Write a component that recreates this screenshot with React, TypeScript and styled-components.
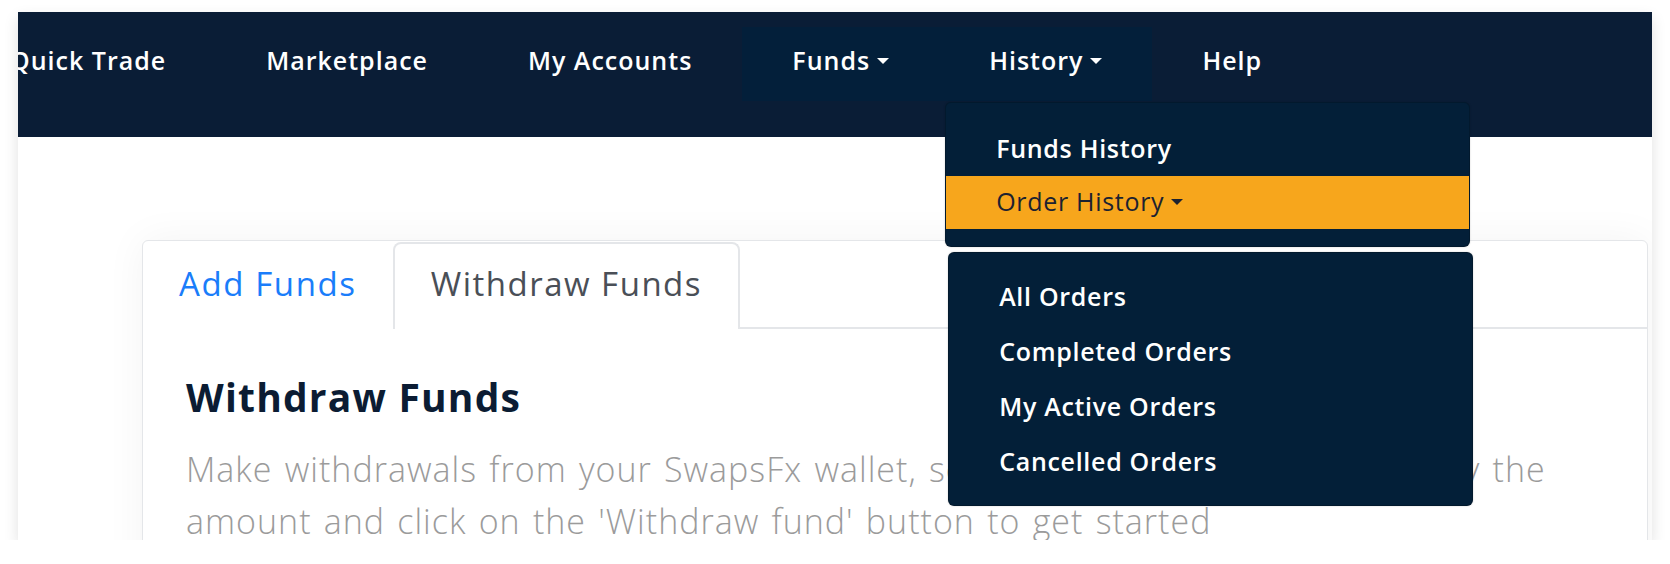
import React from "react";
import styled, { createGlobalStyle } from "styled-components";

const GlobalStyle = createGlobalStyle`
  html, body { margin: 0; padding: 0; background: #ffffff; }
  body { font-family: "Open Sans", "Liberation Sans", sans-serif; }
  * { box-sizing: border-box; }
`;

const Frame = styled.div`
  position: relative;
  margin: 12px 18px 0 18px;
  width: 1634px;
  height: 528px;
  overflow: hidden;
  background: #ffffff;
  box-shadow: 0 6px 14px rgba(0, 0, 0, 0.12);
`;

const Navbar = styled.nav`
  height: 125px;
  background: #0a1d36;
  display: flex;
  align-items: flex-start;
  padding-top: 15px;
  position: relative;
  z-index: 5;
`;

const NavList = styled.ul`
  list-style: none;
  margin: 0 0 0 -58px;
  padding: 0;
  display: flex;
`;

const NavItem = styled.li<{ $dropdown?: boolean }>`
  position: relative;
  height: 74px;
  padding: 0 50px 9px 50px;
  display: flex;
  align-items: center;
  gap: 7px;
  background: ${(p) => (p.$dropdown ? "#031f3a" : "transparent")};
  color: #ffffff;
  font-weight: 600;
  font-size: 25px;
  letter-spacing: 1px;
  white-space: nowrap;
`;

const Caret = styled.span<{ $color?: string }>`
  display: inline-block;
  width: 0;
  height: 0;
  border-left: 6px solid transparent;
  border-right: 6px solid transparent;
  border-top: 6px solid ${(p) => p.$color || "#ffffff"};
  margin-top: 2px;
`;

const Menu = styled.div<{ $sub?: boolean }>`
  position: absolute;
  left: ${(p) => (p.$sub ? "2px" : "6px")};
  top: ${(p) => (p.$sub ? "calc(100% + 23px)" : "calc(100% + 1px)")};
  width: 525px;
  background: #031f38;
  border: 1px solid rgba(0, 0, 0, 0.18);
  border-radius: 6px;
  box-shadow: 0 0 2px rgba(0, 0, 0, 0.2);
  padding: ${(p) => (p.$sub ? "17px 0 15px" : "20px 0 17px")};
  display: flex;
  flex-direction: column;
`;

const MenuItem = styled.div<{ $active?: boolean; $tall?: boolean }>`
  height: ${(p) => (p.$tall ? "55px" : "53px")};
  padding: 0 0 4px 50px;
  display: flex;
  align-items: center;
  gap: 7px;
  background: ${(p) => (p.$active ? "#f7a61c" : "transparent")};
  color: ${(p) => (p.$active ? "#1c2230" : "#ffffff")};
  font-weight: ${(p) => (p.$active ? 500 : 600)};
  font-size: 25px;
  letter-spacing: 0.7px;
  white-space: nowrap;
`;

const SubWrap = styled.div`
  position: relative;
`;

const Content = styled.div`
  padding: 103px 4px 0 124px;
`;

const Card = styled.div`
  border: 1px solid #e4e6e9;
  border-radius: 6px;
  background: #ffffff;
  box-shadow: 0 0 40px rgba(0, 0, 0, 0.05);
  height: 600px;
`;

const Tabs = styled.div`
  display: flex;
  padding-top: 1px;
  border-bottom: 2px solid #e4e6e9;
`;

const Tab = styled.div<{ $active?: boolean }>`
  height: 87px;
  padding: ${(p) => (p.$active ? "0 36px 6px 36px" : "0 34px 6px 34px")};
  display: flex;
  align-items: center;
  font-size: 33px;
  letter-spacing: ${(p) => (p.$active ? "1.5px" : "1.6px")};
  font-weight: 400;
  color: ${(p) => (p.$active ? "#4a4f57" : "#1a7dfa")};
  border: 2px solid ${(p) => (p.$active ? "#e4e6e9" : "transparent")};
  border-bottom: none;
  border-radius: 8px 8px 0 0;
  margin-bottom: -2px;
  background: #ffffff;
  white-space: nowrap;
`;

const Body = styled.div`
  padding: 42px 44px 0 43px;
`;

const Heading = styled.h2`
  margin: 0 0 20px 0;
  font-size: 39px;
  font-weight: 700;
  letter-spacing: 1.2px;
  color: #0b1c33;
  line-height: 52px;
`;

const Paragraph = styled.p`
  margin: 0;
  font-size: 34px;
  font-weight: 300;
  letter-spacing: 1px;
  word-spacing: 2.4px;
  line-height: 52px;
  color: #9b9b9b;
  white-space: nowrap;
`;

export default function App() {
  return (
    <>
      <GlobalStyle />
      <Frame>
        <Navbar>
          <NavList>
            <NavItem>Quick Trade</NavItem>
            <NavItem>Marketplace</NavItem>
            <NavItem>My Accounts</NavItem>
            <NavItem $dropdown>
              Funds <Caret />
            </NavItem>
            <NavItem $dropdown>
              History <Caret />
              <Menu>
                <MenuItem>Funds History</MenuItem>
                <SubWrap>
                  <MenuItem $active>
                    Order History <Caret $color="#1c2230" />
                  </MenuItem>
                  <Menu $sub>
                    <MenuItem $tall>All Orders</MenuItem>
                    <MenuItem $tall>Completed Orders</MenuItem>
                    <MenuItem $tall>My Active Orders</MenuItem>
                    <MenuItem $tall>Cancelled Orders</MenuItem>
                  </Menu>
                </SubWrap>
              </Menu>
            </NavItem>
            <NavItem>Help</NavItem>
          </NavList>
        </Navbar>
        <Content>
          <Card>
            <Tabs>
              <Tab>Add Funds</Tab>
              <Tab $active>Withdraw Funds</Tab>
            </Tabs>
            <Body>
              <Heading>Withdraw Funds</Heading>
              <Paragraph>
                Make withdrawals from your SwapsFx wallet, select the currency wallet, specify the
                <br />
                amount and click on the 'Withdraw fund' button to get started
              </Paragraph>
            </Body>
          </Card>
        </Content>
      </Frame>
    </>
  );
}
